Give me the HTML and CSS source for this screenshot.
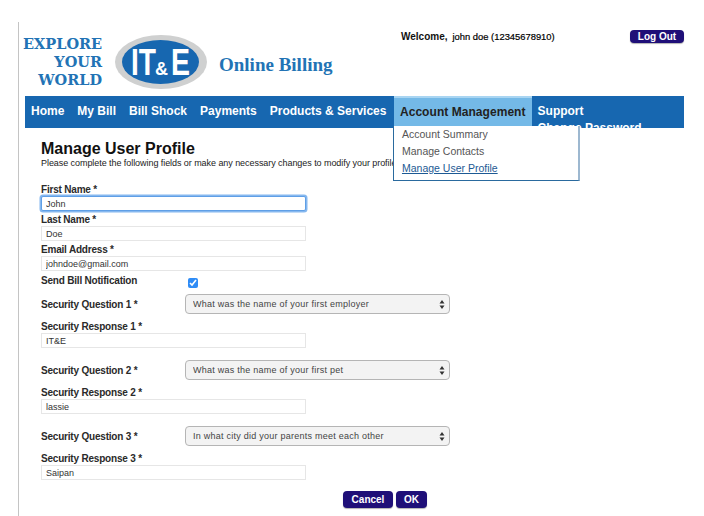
FILE: index.html
```html
<!DOCTYPE html>
<html lang="en">
<head>
    <meta charset="UTF-8">
    <meta name="viewport" content="width=device-width, initial-scale=1.0">
    <title>Manage User Profile</title>
    <link rel="stylesheet" href="styles.css">
</head>
<body>
    <div class="page">
        <header class="header">
            <div class="slogan">EXPLORE<br>YOUR<br>WORLD</div>
            <svg class="logo" width="94" height="56" viewBox="0 0 94 56">
                <ellipse cx="47" cy="27" rx="46" ry="27" fill="#cfd0d0"/>
                <ellipse cx="46.5" cy="27" rx="38.5" ry="22" fill="#1767b0"/>
                <text class="logo-big" x="17" y="40" textLength="25" lengthAdjust="spacingAndGlyphs">IT</text>
                <text class="logo-small" x="41" y="40">&amp;</text>
                <text class="logo-big" x="57" y="40" textLength="19" lengthAdjust="spacingAndGlyphs">E</text>
            </svg>
            <div class="site-title">Online Billing</div>
            <div class="welcome"><b>Welcome,</b><span class="user">john doe (12345678910)</span></div>
            <button class="btn btn-logout">Log Out</button>
        </header>

        <nav class="nav">
            <a class="nav-item" href="#">Home</a>
            <a class="nav-item" href="#">My Bill</a>
            <a class="nav-item" href="#">Bill Shock</a>
            <a class="nav-item" href="#">Payments</a>
            <a class="nav-item" href="#">Products &amp; Services</a>
            <div class="nav-item nav-active">
                Account Management
                <div class="dropdown">
                    <a href="#">Account Summary</a>
                    <a href="#">Manage Contacts</a>
                    <a href="#" class="current">Manage User Profile</a>
                </div>
            </div>
            <div class="nav-item nav-support">
                <a href="#">Support</a>
                <a href="#">Change Password</a>
            </div>
        </nav>

        <main class="content">
            <h1>Manage User Profile</h1>
            <p class="intro">Please complete the following fields or make any necessary changes to modify your profile</p>

            <form>
                <div class="field">
                    <label>First Name *</label>
                    <input class="text-input focused" type="text" value="John">
                </div>
                <div class="field">
                    <label>Last Name *</label>
                    <input class="text-input" type="text" value="Doe">
                </div>
                <div class="field">
                    <label>Email Address *</label>
                    <input class="text-input" type="text" value="johndoe@gmail.com">
                </div>
                <div class="check-row">
                    <label>Send Bill Notification</label>
                    <input type="checkbox" checked>
                </div>

                <div class="select-row">
                    <label>Security Question 1 *</label>
                    <div class="select-wrap">
                        <select><option>What was the name of your first employer</option></select>
                        <svg class="arrows" width="6" height="9" viewBox="0 0 6 9"><path d="M3 0 5.5 3.4H.5zM3 9 .5 5.6h5z" fill="#333"/></svg>
                    </div>
                </div>
                <div class="field after-select">
                    <label>Security Response 1 *</label>
                    <input class="text-input" type="text" value="IT&amp;E">
                </div>

                <div class="select-row spaced">
                    <label>Security Question 2 *</label>
                    <div class="select-wrap">
                        <select><option>What was the name of your first pet</option></select>
                        <svg class="arrows" width="6" height="9" viewBox="0 0 6 9"><path d="M3 0 5.5 3.4H.5zM3 9 .5 5.6h5z" fill="#333"/></svg>
                    </div>
                </div>
                <div class="field after-select">
                    <label>Security Response 2 *</label>
                    <input class="text-input" type="text" value="lassie">
                </div>

                <div class="select-row spaced">
                    <label>Security Question 3 *</label>
                    <div class="select-wrap">
                        <select><option>In what city did your parents meet each other</option></select>
                        <svg class="arrows" width="6" height="9" viewBox="0 0 6 9"><path d="M3 0 5.5 3.4H.5zM3 9 .5 5.6h5z" fill="#333"/></svg>
                    </div>
                </div>
                <div class="field after-select">
                    <label>Security Response 3 *</label>
                    <input class="text-input" type="text" value="Saipan">
                </div>

                <div class="actions">
                    <button type="button" class="btn btn-form">Cancel</button>
                    <button type="button" class="btn btn-form">OK</button>
                </div>
            </form>
        </main>
    </div>
</body>
</html>
```

FILE: styles.css
```css
* {
    box-sizing: border-box;
}
html, body {
    margin: 0;
    padding: 0;
    height: 100%;
    overflow: hidden;
}
body {
    font-family: "Liberation Sans", Arial, sans-serif;
    background-color: #fff;
    color: #222;
    padding-top: 22px;
}
.page {
    margin-left: 18px;
    width: 666px;
    height: 494px;
    border-left: 1px solid #c4c4c4;
}

/* Header */
.header {
    display: flex;
    height: 74px;
    padding-left: 4px;
}
.slogan {
    width: 79px;
    margin-top: 13px;
    text-align: right;
    font-family: "DejaVu Serif", serif;
    font-weight: bold;
    font-size: 14.5px;
    line-height: 18px;
    color: #2273b5;
}
.logo {
    margin: 13px 0 0 12px;
}
.logo-big {
    font-family: "Liberation Sans", sans-serif;
    font-weight: bold;
    font-size: 37px;
    fill: #fff;
}
.logo-small {
    font-family: "Liberation Sans", sans-serif;
    font-weight: bold;
    font-size: 18px;
    fill: #fff;
}
.site-title {
    margin: 31px 0 0 11px;
    width: 182px;
    font-family: "Liberation Serif", serif;
    font-weight: bold;
    font-size: 19px;
    line-height: 24px;
    color: #2273b5;
}
.welcome {
    margin-top: 8px;
    font-size: 10px;
    line-height: 13px;
    color: #111;
}
.user {
    margin-left: 5px;
    font-size: 9.4px;
    color: #000;
    -webkit-text-stroke: 0.2px #000;
}
.btn {
    border: 0;
    border-radius: 4px;
    padding: 0;
    background-color: #1f0f78;
    color: #fff;
    font-family: inherit;
    font-weight: bold;
}
.btn-logout {
    margin: 8px 0 0 auto;
    width: 54px;
    height: 13px;
    font-size: 10px;
    line-height: 13px;
    box-shadow: 0 1px 1px rgba(0, 0, 0, 0.3);
}

/* Nav */
.nav {
    display: flex;
    margin-left: 6px;
    height: 32px;
    background-color: #1767b0;
}
.nav-item {
    padding: 7px 6.5px 0;
    font-size: 12px;
    font-weight: bold;
    line-height: 17px;
    color: #fff;
    text-decoration: none;
    white-space: nowrap;
}
.nav-item:first-child {
    padding-left: 6px;
}
.nav-active {
    position: relative;
    z-index: 2;
    height: 30px;
    margin-left: 1px;
    padding: 6px 6px 0;
    letter-spacing: 0.05px;
    background-color: #74b9e7;
    border-top: 2px solid #a9d5f2;
    color: #222;
}
.dropdown {
    position: absolute;
    left: -1px;
    top: 28px;
    width: 187px;
    height: 55px;
    padding: 0 8px;
    background-color: #fff;
    border: 1px solid #2a6a9e;
    border-top: 0;
    border-right: 2px solid #9db8d0;
    font-size: 10.5px;
    font-weight: normal;
    letter-spacing: 0;
}
.dropdown a {
    display: block;
    line-height: 17px;
    color: #555;
    text-decoration: none;
}
.dropdown a.current {
    color: #1d5a94;
    text-decoration: underline;
}
.nav-support {
    height: 32px;
    overflow: hidden;
    padding-left: 6px;
}
.nav-support a {
    display: block;
    color: #fff;
    text-decoration: none;
}

/* Form */
.content {
    padding-left: 22px;
}
h1 {
    margin: 11px 0 0;
    font-size: 16px;
    line-height: 20px;
    color: #111;
}
.intro {
    margin: -1px 0 0;
    font-size: 9px;
    line-height: 11px;
    letter-spacing: -0.06px;
    color: #222;
    white-space: nowrap;
}
label {
    display: block;
    font-size: 10px;
    font-weight: bold;
    line-height: 13px;
    letter-spacing: -0.2px;
    color: #2a2a2a;
}
form {
    margin-top: 14px;
}
.field {
    margin-top: 2px;
}
.field.after-select {
    margin-top: 6px;
}
.text-input {
    display: block;
    width: 265px;
    height: 15px;
    padding: 0 4px;
    border: 1px solid #e6e6e6;
    border-radius: 0;
    background-color: #fff;
    font-family: inherit;
    font-size: 9px;
    color: #333;
    outline: none;
}
.text-input.focused {
    border: 1px solid #5f9fe6;
    border-radius: 2px;
    box-shadow: 0 0 0 1.5px #86b8ef;
}
.check-row {
    display: flex;
    margin-top: 3px;
    height: 13px;
}
.check-row label {
    width: 147px;
}
.check-row input {
    margin: 4px 0 0;
    width: 10px;
    height: 10px;
    accent-color: #2f8cf6;
}
.select-row {
    display: flex;
    align-items: center;
    margin-top: 7px;
}
.select-row.spaced {
    margin-top: 12px;
}
.select-row label {
    width: 144px;
}
.select-wrap {
    position: relative;
    width: 265px;
    height: 20px;
}
.select-wrap select {
    display: block;
    width: 100%;
    height: 100%;
    padding: 0 0 0 7px;
    appearance: none;
    border: 1px solid #b5b5b5;
    border-radius: 4px;
    background-color: #f3f3f3;
    font-family: inherit;
    font-size: 9px;
    letter-spacing: 0.25px;
    color: #444;
}
.arrows {
    position: absolute;
    right: 5px;
    top: 6px;
}
.actions {
    display: flex;
    gap: 3px;
    margin-top: 11px;
    padding-left: 302px;
}
.btn-form {
    height: 17px;
    font-size: 10px;
    line-height: 17px;
    box-shadow: 0 1px 1px rgba(0, 0, 0, 0.3);
}
.btn-form:first-child {
    width: 50px;
}
.btn-form:last-child {
    width: 31px;
}
```
